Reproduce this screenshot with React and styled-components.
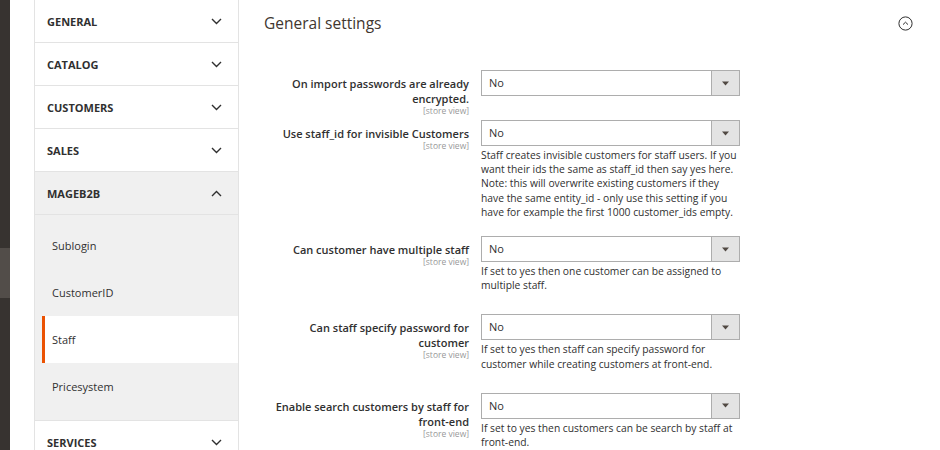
import React from 'react';
import styled, { createGlobalStyle } from 'styled-components';

const Global = createGlobalStyle`
  html, body {
    margin: 0;
    padding: 0;
    background: #fff;
    font-family: 'Open Sans', 'Liberation Sans', sans-serif;
    color: #303030;
  }
`;

const Page = styled.div`
  display: flex;
  width: 940px;
  height: 450px;
  overflow: hidden;
`;

const Strip = styled.div`
  width: 10px;
  flex: none;
  background: #373330;
  display: flex;
  flex-direction: column;
  .strip__active {
    margin-top: 248px;
    height: 50px;
    background: #524d49;
  }
`;

const NavWrap = styled.div`
  flex: none;
  padding-left: 24px;
`;

const Nav = styled.nav`
  width: 203px;
  border-left: 1px solid #e3e3e3;
  border-right: 1px solid #e3e3e3;
`;

const Section = styled.div`
  height: 42px;
  display: flex;
  align-items: center;
  justify-content: space-between;
  padding: 0 16px 0 12px;
  border-bottom: 1px solid #e3e3e3;
  background: ${p => (p.$open ? '#f0f0f0' : '#fff')};
  font-size: 11px;
  font-weight: 700;
  text-transform: uppercase;
  color: #303030;
`;

const SubList = styled.div`
  background: #f0f0f0;
  padding: 7px 0 10px 7px;
  border-bottom: 1px solid #e3e3e3;
`;

const SubItem = styled.div`
  height: 47px;
  display: flex;
  align-items: center;
  padding-left: 7px;
  border-left: 3px solid ${p => (p.$active ? '#eb5202' : 'transparent')};
  background: ${p => (p.$active ? '#fff' : 'transparent')};
  font-size: 11px;
  color: #303030;
`;

const Main = styled.main`
  flex: 1;
  padding: 13px 0 0 25px;
`;

const Head = styled.div`
  display: flex;
  align-items: center;
  justify-content: space-between;
  padding-right: 27px;
  h2 {
    margin: 0;
    font-size: 15.5px;
    line-height: 20px;
    font-weight: 400;
    color: #41362f;
  }
`;

const Form = styled.div`
  margin-top: 37px;
`;

const Row = styled.div`
  display: grid;
  grid-template-columns: 205px 259px;
  column-gap: 12px;
  margin-bottom: ${p => p.$space}px;
`;

const Label = styled.div`
  text-align: right;
  padding-top: 6px;
  font-size: 11px;
  line-height: 15px;
  font-weight: 600;
  color: #303030;
  span {
    display: block;
    font-size: 8.5px;
    line-height: 9px;
    font-weight: 400;
    color: #999;
  }
`;

const Select = styled.div`
  height: 24px;
  display: flex;
  border: 1px solid #adadad;
  background: #fff;
  .select__value {
    flex: 1;
    padding-left: 7px;
    font-size: 11px;
    line-height: 24px;
    color: #303030;
  }
  .select__button {
    width: 27px;
    border-left: 1px solid #adadad;
    background: #e3e3e3;
    display: flex;
    align-items: center;
    justify-content: center;
  }
`;

const Note = styled.div`
  margin-top: 2px;
  font-size: 10.3px;
  line-height: 14.2px;
  color: #303030;
`;

const Chevron = ({ up }) => (
  <svg width="11" height="7" viewBox="0 0 11 7">
    <polyline
      points={up ? '1,6 5.5,1.5 10,6' : '1,1 5.5,5.5 10,1'}
      fill="none"
      stroke="#303030"
      strokeWidth="1.4"
    />
  </svg>
);

const sections = ['General', 'Catalog', 'Customers', 'Sales'];
const subs = ['Sublogin', 'CustomerID', 'Staff', 'Pricesystem'];

const rows = [
  {
    label: 'On import passwords are already encrypted.',
    space: 5
  },
  {
    label: 'Use staff_id for invisible Customers',
    note:
      'Staff creates invisible customers for staff users. If you want their ids the same as staff_id then say yes here. Note: this will overwrite existing customers if they have the same entity_id - only use this setting if you have for example the first 1000 customer_ids empty.',
    space: 17
  },
  {
    label: 'Can customer have multiple staff',
    note: 'If set to yes then one customer can be assigned to multiple staff.',
    space: 22
  },
  {
    label: 'Can staff specify password for customer',
    note:
      'If set to yes then staff can specify password for customer while creating customers at front-end.',
    space: 22
  },
  {
    label: 'Enable search customers by staff for front-end',
    note: 'If set to yes then customers can be search by staff at front-end.',
    space: 0
  }
];

export default function App() {
  return (
    <Page>
      <Global />
      <Strip>
        <div className="strip__active" />
      </Strip>
      <NavWrap>
        <Nav>
          {sections.map(s => (
            <Section key={s}>
              {s}
              <Chevron />
            </Section>
          ))}
          <Section $open>
            MageB2B
            <Chevron up />
          </Section>
          <SubList>
            {subs.map(s => (
              <SubItem key={s} $active={s === 'Staff'}>
                {s}
              </SubItem>
            ))}
          </SubList>
          <Section>
            Services
            <Chevron />
          </Section>
        </Nav>
      </NavWrap>
      <Main>
        <Head>
          <h2>General settings</h2>
          <svg width="15" height="15" viewBox="0 0 15 15">
            <circle cx="7.5" cy="7.5" r="6.6" fill="none" stroke="#303030" strokeWidth="1" />
            <polyline points="5,8.6 7.5,6.2 10,8.6" fill="none" stroke="#303030" strokeWidth="1" />
          </svg>
        </Head>
        <Form>
          {rows.map((r, i) => (
            <Row key={i} $space={r.space}>
              <Label>
                {r.label}
                <span>[store view]</span>
              </Label>
              <div>
                <Select>
                  <div className="select__value">No</div>
                  <div className="select__button">
                    <svg width="7" height="5" viewBox="0 0 7 5">
                      <path d="M0 0.5 H7 L3.5 4.5 Z" fill="#514943" />
                    </svg>
                  </div>
                </Select>
                {r.note && <Note>{r.note}</Note>}
              </div>
            </Row>
          ))}
        </Form>
      </Main>
    </Page>
  );
}
